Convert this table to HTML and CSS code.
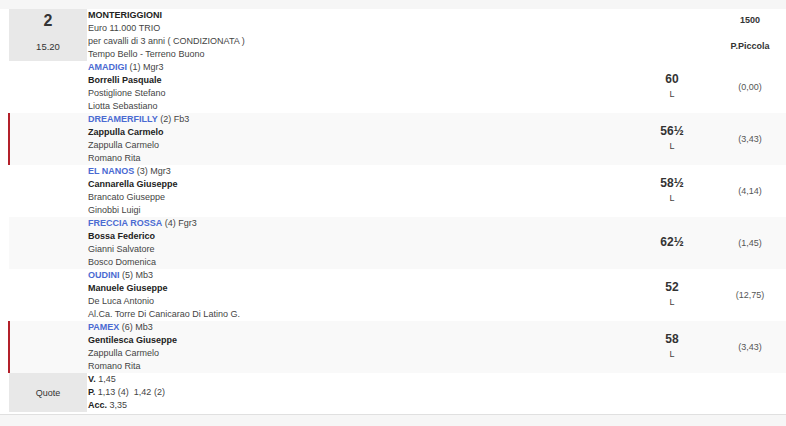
FILE: index.html
```html
<!DOCTYPE html>
<html>
<head>
<meta charset="utf-8">
<link rel="stylesheet" href="styles.css">
</head>
<body>
<div class="topstrip"></div>
<div class="race">
  <div class="row head">
    <div class="box">
      <div class="num">2</div>
      <div class="time">15.20</div>
    </div>
    <div class="info">
      <div class="b">MONTERIGGIONI</div>
      <div>Euro 11.000 TRIO</div>
      <div>per cavalli di 3 anni ( CONDIZIONATA )</div>
      <div>Tempo Bello - Terreno Buono</div>
    </div>
    <div class="wt"></div>
    <div class="last headlast">
      <div class="dist">1500</div>
      <div class="track">P.Piccola</div>
    </div>
  </div>

  <div class="row">
    <div class="side"></div>
    <div class="info">
      <div><span class="horse">AMADIGI</span> (1) Mgr3</div>
      <div class="b">Borrelli Pasquale</div>
      <div>Postiglione Stefano</div>
      <div>Liotta Sebastiano</div>
    </div>
    <div class="wt"><div class="kg">60</div><div class="l">L</div></div>
    <div class="last"><div class="odds">(0,00)</div></div>
  </div>

  <div class="row alt marked">
    <div class="side"></div>
    <div class="info">
      <div><span class="horse">DREAMERFILLY</span> (2) Fb3</div>
      <div class="b">Zappulla Carmelo</div>
      <div>Zappulla Carmelo</div>
      <div>Romano Rita</div>
    </div>
    <div class="wt"><div class="kg">56½</div><div class="l">L</div></div>
    <div class="last"><div class="odds">(3,43)</div></div>
  </div>

  <div class="row">
    <div class="side"></div>
    <div class="info">
      <div><span class="horse">EL NANOS</span> (3) Mgr3</div>
      <div class="b">Cannarella Giuseppe</div>
      <div>Brancato Giuseppe</div>
      <div>Ginobbi Luigi</div>
    </div>
    <div class="wt"><div class="kg">58½</div><div class="l">L</div></div>
    <div class="last"><div class="odds">(4,14)</div></div>
  </div>

  <div class="row alt">
    <div class="side"></div>
    <div class="info">
      <div><span class="horse">FRECCIA ROSSA</span> (4) Fgr3</div>
      <div class="b">Bossa Federico</div>
      <div>Gianni Salvatore</div>
      <div>Bosco Domenica</div>
    </div>
    <div class="wt"><div class="kg">62½</div></div>
    <div class="last"><div class="odds">(1,45)</div></div>
  </div>

  <div class="row">
    <div class="side"></div>
    <div class="info">
      <div><span class="horse">OUDINI</span> (5) Mb3</div>
      <div class="b">Manuele Giuseppe</div>
      <div>De Luca Antonio</div>
      <div>Al.Ca. Torre Di Canicarao Di Latino G.</div>
    </div>
    <div class="wt"><div class="kg">52</div><div class="l">L</div></div>
    <div class="last"><div class="odds">(12,75)</div></div>
  </div>

  <div class="row alt marked">
    <div class="side"></div>
    <div class="info">
      <div><span class="horse">PAMEX</span> (6) Mb3</div>
      <div class="b">Gentilesca Giuseppe</div>
      <div>Zappulla Carmelo</div>
      <div>Romano Rita</div>
    </div>
    <div class="wt"><div class="kg">58</div><div class="l">L</div></div>
    <div class="last"><div class="odds">(3,43)</div></div>
  </div>

  <div class="row quote">
    <div class="box qbox">Quote</div>
    <div class="info">
      <div><span class="b">V.</span> 1,45</div>
      <div><span class="b">P.</span> 1,13 (4)&nbsp; 1,42 (2)</div>
      <div><span class="b">Acc.</span> 3,35</div>
    </div>
    <div class="wt"></div>
    <div class="last"></div>
  </div>
</div>
<div class="bottom"></div>
</body>
</html>
```

FILE: styles.css
```css
html, body {
  margin: 0;
  padding: 0;
  background: #ffffff;
  font-family: "Liberation Sans", Arial, sans-serif;
  font-size: 9px;
  color: #444;
}
.topstrip {
  height: 9px;
  background: #f6f6f6;
}
.race {
  margin-left: 9px;
}
.row {
  display: grid;
  grid-template-columns: 78px 1fr 84px 72px;
  height: 52px;
  position: relative;
}
.row.alt {
  background: #f9f9f9;
}
.row.marked::before {
  content: "";
  position: absolute;
  left: -1px;
  top: 0;
  bottom: 0;
  width: 2px;
  background: #b3202a;
}
.info {
  padding-left: 1px;
  line-height: 13px;
}
.b {
  font-weight: bold;
  color: #222;
}
.horse {
  font-weight: bold;
  color: #4a6ad2;
}
.box {
  background: #e8e8e8;
  display: flex;
  flex-direction: column;
  align-items: center;
}
.num {
  font-size: 16px;
  font-weight: bold;
  line-height: 20px;
  margin-top: 2px;
  color: #333;
}
.time {
  margin-top: 9px;
  line-height: 13px;
  font-size: 9.5px;
  color: #333;
}
.wt {
  display: flex;
  flex-direction: column;
  align-items: center;
  justify-content: center;
  padding-bottom: 3px;
}
.kg {
  font-size: 12px;
  line-height: 16px;
  color: #333;
  font-weight: bold;
}
.l {
  font-size: 9px;
  line-height: 14px;
  color: #444;
}
.last {
  display: flex;
  flex-direction: column;
  align-items: center;
  justify-content: center;
}
.headlast {
  justify-content: flex-start;
}
.dist {
  font-size: 9px;
  font-weight: bold;
  color: #333;
  line-height: 13px;
  margin-top: 5px;
}
.track {
  font-size: 9px;
  font-weight: bold;
  color: #333;
  line-height: 13px;
  margin-top: 13px;
}
.odds {
  font-size: 9px;
  color: #555;
  line-height: 13px;
}
.row.quote {
  height: 39px;
}
.qbox {
  justify-content: center;
  color: #333;
}
.bottom {
  margin-top: 2px;
  border-top: 1px solid #e0e0e0;
  height: 12px;
  background: #f6f6f6;
}
```
